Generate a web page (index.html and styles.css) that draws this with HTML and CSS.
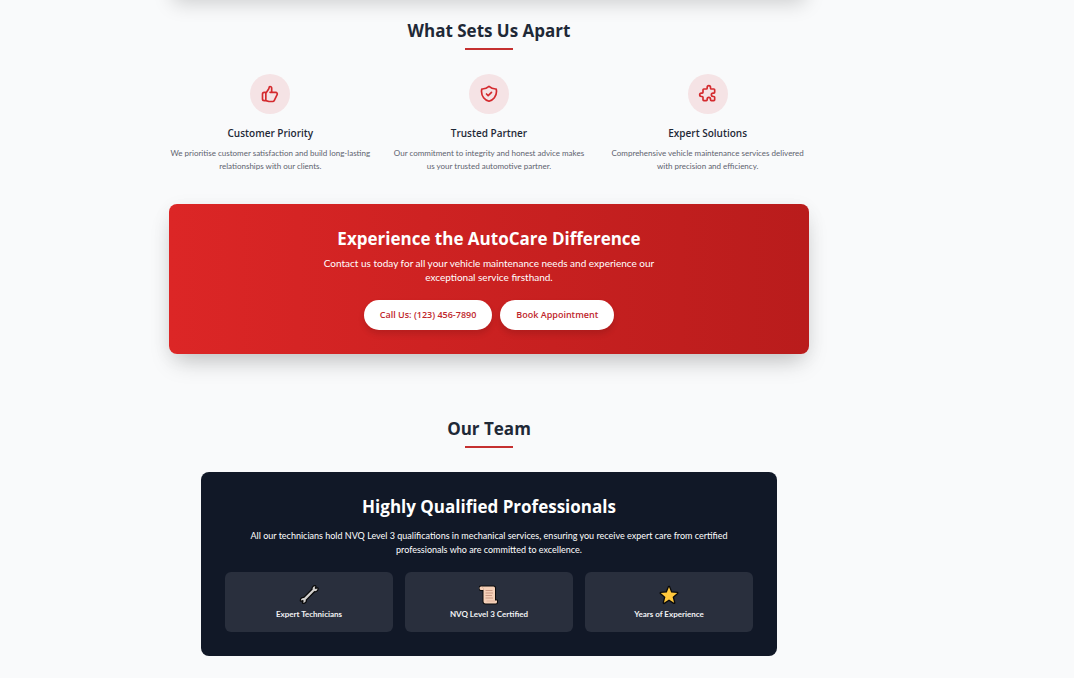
FILE: index.html
```html
<!DOCTYPE html>
<html lang="en">
<head>
<meta charset="utf-8">
<meta name="viewport" content="width=device-width, initial-scale=1">
<title>AutoCare</title>
<link rel="stylesheet" href="styles.css">
</head>
<body>
<main class="page">
  <div class="intro-card"></div>

  <section class="apart">
    <h2 class="section-title">What Sets Us Apart</h2>
    <div class="features">
      <article class="feature">
        <span class="feature-icon">
          <svg viewBox="0 0 24 24" aria-hidden="true"><path d="M14 10h4.764a2 2 0 011.789 2.894l-3.5 7A2 2 0 0115.263 21h-4.017c-.163 0-.326-.02-.485-.06L7 20m7-10V5a2 2 0 00-2-2h-.095c-.5 0-.905.405-.905.905 0 .714-.211 1.412-.608 2.006L7 11v9m7-10h-2M7 20H5a2 2 0 01-2-2v-6a2 2 0 012-2h2.5"/></svg>
        </span>
        <h3 class="feature-title">Customer Priority</h3>
        <p class="feature-text">We prioritise customer satisfaction and build long-lasting<br>relationships with our clients.</p>
      </article>
      <article class="feature">
        <span class="feature-icon">
          <svg viewBox="0 0 24 24" aria-hidden="true"><path d="M9 12l2 2 4-4m5.618-4.016A11.955 11.955 0 0112 2.944a11.955 11.955 0 01-8.618 3.04A12.02 12.02 0 003 9c0 5.591 3.824 10.29 9 11.622 5.176-1.332 9-6.03 9-11.622 0-1.042-.133-2.052-.382-3.016z"/></svg>
        </span>
        <h3 class="feature-title">Trusted Partner</h3>
        <p class="feature-text">Our commitment to integrity and honest advice makes<br>us your trusted automotive partner.</p>
      </article>
      <article class="feature">
        <span class="feature-icon">
          <svg viewBox="0 0 24 24" aria-hidden="true"><path d="M11 4a2 2 0 114 0v1a1 1 0 001 1h3a1 1 0 011 1v3a1 1 0 01-1 1h-1a2 2 0 100 4h1a1 1 0 011 1v3a1 1 0 01-1 1h-3a1 1 0 01-1-1v-1a2 2 0 10-4 0v1a1 1 0 01-1 1H7a1 1 0 01-1-1v-3a1 1 0 00-1-1H4a2 2 0 110-4h1a1 1 0 001-1V7a1 1 0 011-1h3a1 1 0 001-1V4z"/></svg>
        </span>
        <h3 class="feature-title">Expert Solutions</h3>
        <p class="feature-text">Comprehensive vehicle maintenance services delivered<br>with precision and efficiency.</p>
      </article>
    </div>
  </section>

  <section class="cta">
    <h2 class="card-title">Experience the AutoCare Difference</h2>
    <p class="cta-text">Contact us today for all your vehicle maintenance needs and experience our<br>exceptional service firsthand.</p>
    <div class="cta-actions">
      <a class="pill" href="tel:1234567890">Call Us: (123) 456-7890</a>
      <a class="pill" href="#book">Book Appointment</a>
    </div>
  </section>

  <section class="team">
    <h2 class="section-title">Our Team</h2>
    <div class="team-card">
      <h3 class="card-title">Highly Qualified Professionals</h3>
      <p class="team-text">All our technicians hold NVQ Level 3 qualifications in mechanical services, ensuring you receive expert care from certified<br>professionals who are committed to excellence.</p>
      <ul class="tiles">
        <li class="tile">
          <svg class="tile-icon" viewBox="0 0 20 20" aria-hidden="true">
            <path d="M18.500 3.500l-2 .6-.8-.8.6-2c-1.800-.1-3 1.400-2.600 3.100L5.100 13c-1.700-.4-3.300.8-3.200 2.600l2-.6.8.8-.6 2c1.800.1 3-1.400 2.600-3.100l8.600-8.600c1.700.4 3.300-.8 3.200-2.600z" fill="#d2d0ce" stroke="#0a0a0a" stroke-width="2.400" stroke-linejoin="round" paint-order="stroke"/>
          </svg>
          <span>Expert Technicians</span>
        </li>
        <li class="tile">
          <svg class="tile-icon" viewBox="0 0 20 20" aria-hidden="true">
            <path d="M2 1.500h12.500a1.500 1.500 0 011.500 1.500v12.500h2v1.500a1.500 1.500 0 01-1.500 1.500H6.500a2 2 0 01-2-2V5H2.500a1.500 1.500 0 01-.5-3.500z" fill="#f5d0b8" stroke="#0a0a0a" stroke-width="2" stroke-linejoin="round" paint-order="stroke"/>
            <path d="M4.500 5V3.500L3 1.800M7.500 16h8.500" fill="none" stroke="#d9ad97" stroke-width=".8"/>
            <path d="M6.500 5.500h7M6.500 8h7.500M6.500 10.500h6.500M6.500 13h7.500" stroke="#c4937e" stroke-width=".9"/>
          </svg>
          <span>NVQ Level 3 Certified</span>
        </li>
        <li class="tile">
          <svg class="tile-icon" viewBox="0 0 20 20" aria-hidden="true">
            <path d="M10 2l2.200 5.600 6 .4-4.600 3.900 1.500 5.900L10 14.500l-5.100 3.300 1.500-5.900L1.800 8l6-.4z" fill="#ffc83d" stroke="#0a0a0a" stroke-width="2.600" stroke-linejoin="round" paint-order="stroke"/>
          </svg>
          <span>Years of Experience</span>
        </li>
      </ul>
    </div>
  </section>
</main>
</body>
</html>
```
FILE: styles.css
```css
* {
  box-sizing: border-box;
}

body {
  margin: 0;
  padding: 0 96px 0 0;
  background: #f9fafb;
  color: #1f2937;
  font-family: "Segoe UI", Lato, "Noto Sans", sans-serif;
  text-align: center;
}

h2, h3, p, ul {
  margin: 0;
  padding: 0;
}

.page {
  max-width: 640px;
  margin: 0 auto;
}

/* Lower edge of the preceding card; only its shadow reaches the view. */
.intro-card {
  height: 80px;
  margin-top: -81px;
  border-radius: 8px;
  background: #fff;
  box-shadow: 0 8px 20px -4px rgba(0, 0, 0, .18);
}

.section-title,
.card-title,
.feature-title,
.pill {
  font-family: "Segoe UI", "Open Sans", "Noto Sans", sans-serif;
  font-weight: 700;
}

.section-title {
  display: flex;
  flex-direction: column;
  align-items: center;
  gap: 6px;
  font-size: 17px;
  line-height: 22px;
}

.section-title::after {
  content: "";
  width: 48px;
  height: 2px;
  background: #c53030;
}

.apart {
  padding-top: 21px;
}

.features {
  display: grid;
  grid-template-columns: repeat(3, minmax(0, 1fr));
  gap: 16px;
  margin-top: 24px;
}

.feature {
  display: flex;
  flex-direction: column;
  align-items: center;
}

.feature-icon {
  display: grid;
  place-items: center;
  width: 40px;
  height: 40px;
  border-radius: 50%;
  background: #f5e3e5;
}

.feature-icon svg {
  width: 20px;
  height: 20px;
  fill: none;
  stroke: #d42a2e;
  stroke-width: 2;
  stroke-linecap: round;
  stroke-linejoin: round;
}

.feature-title {
  margin: 12px 0 7px;
  font-size: 10px;
  line-height: 14px;
  font-weight: 600;
}

.feature-text {
  color: #5d626e;
  font-size: 8px;
  line-height: 13px;
  white-space: nowrap;
}

.card-title {
  font-size: 17px;
  line-height: 22px;
  color: #fff;
}

.cta {
  margin-top: 31px;
  padding: 24px;
  border-radius: 8px;
  background: linear-gradient(to right, #dc2626, #b91c1c);
  box-shadow: 0 12px 25px -6px rgba(0, 0, 0, .22), 0 4px 20px rgba(0, 0, 0, .05);
  color: #fff;
}

.cta-text {
  margin: 6px 0 16px;
  font-size: 10px;
  line-height: 14px;
}

.cta-actions {
  display: flex;
  justify-content: center;
  gap: 8px;
}

.pill {
  padding: 8px 16px;
  border-radius: 15px;
  background: #fff;
  box-shadow: 0 4px 6px rgba(0, 0, 0, .12);
  color: #c0262b;
  font-size: 9px;
  line-height: 14px;
  font-weight: 600;
  text-decoration: none;
}

.team {
  padding: 64px 32px 22px;
}

.team-card {
  margin-top: 24px;
  padding: 24px;
  border-radius: 8px;
  background: #111827;
  color: #fff;
}

.team-text {
  margin: 11px 0 15px;
  font-size: 9px;
  line-height: 14px;
}

.tiles {
  display: grid;
  grid-template-columns: repeat(3, 1fr);
  gap: 12px;
  list-style: none;
}

.tile {
  display: flex;
  flex-direction: column;
  align-items: center;
  gap: 3px;
  padding: 13px 8px 11px;
  border-radius: 6px;
  background: #292f3d;
  color: #f1f2f4;
  font-size: 8px;
  line-height: 13px;
  font-weight: 700;
}

.tile-icon {
  width: 20px;
  height: 20px;
}
```
